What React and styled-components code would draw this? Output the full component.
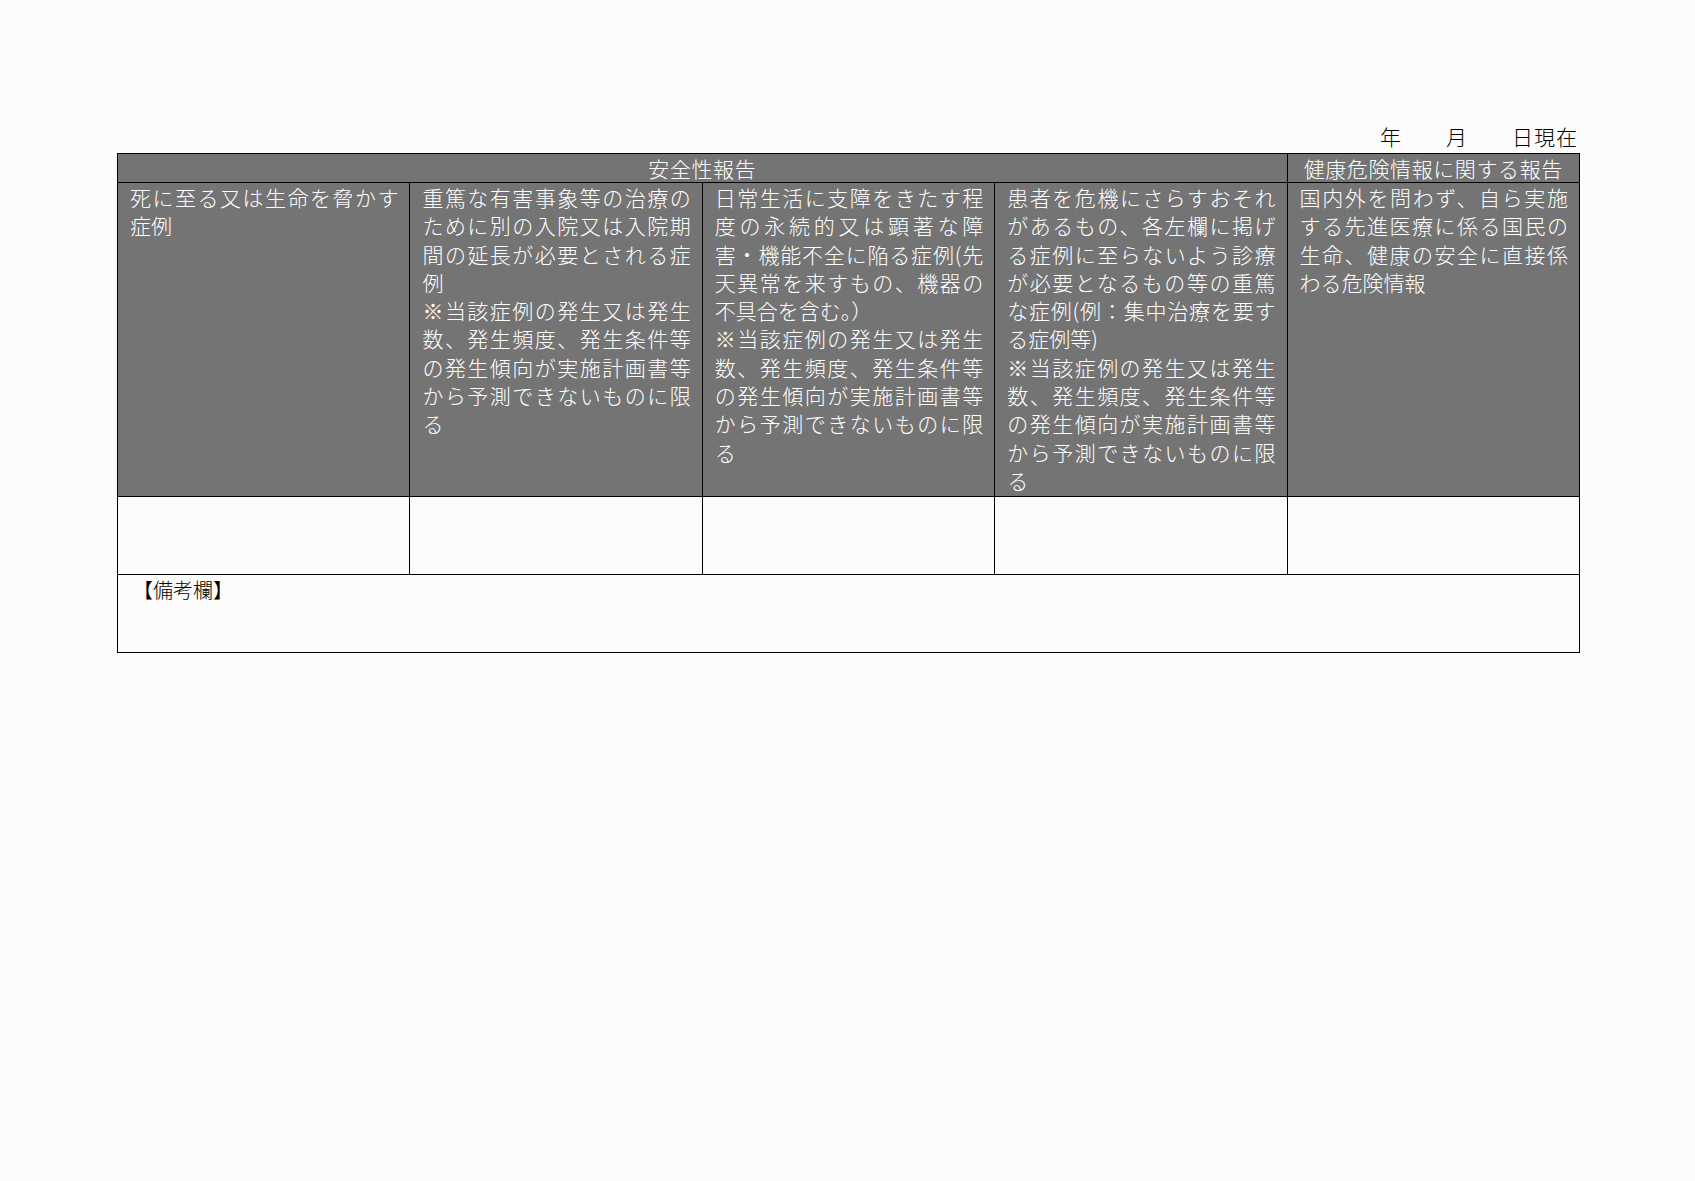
import styled, { createGlobalStyle } from 'styled-components';

const GlobalStyle = createGlobalStyle`
    html, body {
        margin: 0;
        padding: 0;
        background: #fcfcfc;
    }

    body {
        font-family: "Noto Sans CJK JP", "DejaVu Sans", sans-serif;
        color: #000;
    }
`;

const GRAY = '#747474';

const Page = styled.div`
    width: 1695px;
    min-height: 1181px;
    padding-top: 122px;
    box-sizing: border-box;
`;

const Sheet = styled.div`
    width: 1463px;
    margin-left: 117px;
`;

const DateLine = styled.div`
    text-align: right;
    font-size: 21px;
    font-weight: 300;
    line-height: 28px;
    height: 28px;
    padding-right: 2px;
    margin-bottom: 3px;
    letter-spacing: 1px;
`;

const ReportTable = styled.table`
    width: 100%;
    table-layout: fixed;
    border-collapse: collapse;
    font-size: 21px;
    font-weight: 300;
`;

const HeadCell = styled.th`
    background: ${GRAY};
    color: #fff;
    font-weight: 300;
    border: 1px solid #000;
    height: 28px;
    padding: 0;
    line-height: 28px;
    text-align: center;
    letter-spacing: 0.6px;
`;

const BodyCell = styled.td`
    background: ${(p) => (p.$shaded ? GRAY : 'transparent')};
    color: ${(p) => (p.$shaded ? '#fff' : '#000')};
    border: 1px solid #000;
    height: ${(p) => p.$height}px;
    padding: 0 11px 0 12px;
    vertical-align: top;
    box-sizing: border-box;
`;

const Line = styled.div`
    line-height: 28.3px;
    text-align: left;
    text-align-last: ${(p) => (p.$full ? 'justify' : 'left')};
    text-justify: inter-character;
`;

const RemarksCell = styled.td`
    border: 1px solid #000;
    height: 78px;
    box-sizing: border-box;
    padding: 2px 12px 0 15px;
    vertical-align: top;
    font-size: 20px;
    line-height: 26px;
`;

const CAUTION = [
    '※当該症例の発生又は発生',
    '数、発生頻度、発生条件等',
    'の発生傾向が実施計画書等',
    'から予測できないものに限',
    'る',
];

const columns = [
    [['死に至る又は生命を脅かす', '症例']],
    [['重篤な有害事象等の治療の', 'ために別の入院又は入院期', '間の延長が必要とされる症', '例'], CAUTION],
    [['日常生活に支障をきたす程', '度の永続的又は顕著な障', '害・機能不全に陥る症例(先', '天異常を来すもの、機器の', '不具合を含む。）'], CAUTION],
    [['患者を危機にさらすおそれ', 'があるもの、各左欄に掲げ', 'る症例に至らないよう診療', 'が必要となるもの等の重篤', 'な症例(例：集中治療を要す', 'る症例等)'], CAUTION],
    [['国内外を問わず、自ら実施', 'する先進医療に係る国民の', '生命、健康の安全に直接係', 'わる危険情報']],
];

const App = () => (
    <Page>
        <GlobalStyle />
        <Sheet>
            <DateLine>年　　月　　日現在</DateLine>
            <ReportTable>
                <tbody>
                    <tr>
                        <HeadCell colSpan={4}>安全性報告</HeadCell>
                        <HeadCell>健康危険情報に関する報告</HeadCell>
                    </tr>
                    <tr>
                        { columns.map((paragraphs, ci) => (
                            <BodyCell $shaded $height={314} key={ci}>
                                { paragraphs.map((lines, pi) => lines.map((text, li) => (
                                    <Line $full={li < lines.length - 1} key={`${pi}-${li}`}>{text}</Line>
                                ))) }
                            </BodyCell>
                        )) }
                    </tr>
                    <tr>
                        { columns.map((_, ci) => <BodyCell $height={78} key={ci} />) }
                    </tr>
                    <tr>
                        <RemarksCell colSpan={5}>【備考欄】</RemarksCell>
                    </tr>
                </tbody>
            </ReportTable>
        </Sheet>
    </Page>
);

export default App;
